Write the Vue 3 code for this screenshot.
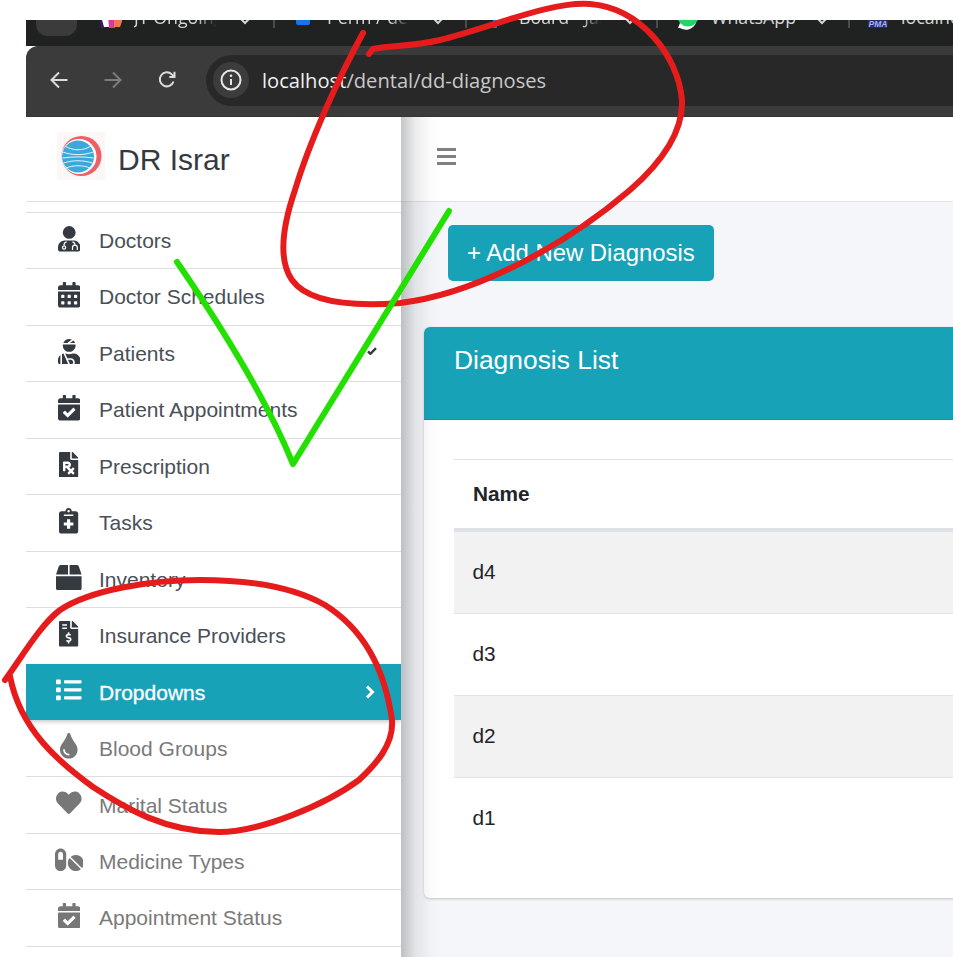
<template>
  <div class="screen">
    <!-- browser chrome -->
    <div class="tabstrip">
      <div class="tab-current"></div>
      <div
        v-for="tab in tabs"
        :key="tab.name"
        class="tab"
        :style="{ width: tab.width + 'px', paddingLeft: tab.pad + 'px' }"
      >
        <svg class="favicon" viewBox="0 0 22 22">
          <template v-if="tab.icon === 'figma'">
            <path d="M-2 -4h10l-3 12h-4z" fill="#3b1a5c" />
            <path d="M1 -4h10l-1 11h-6z" fill="#fff" />
            <path d="M8 -4h9l-2 12h-6z" fill="#d63aa0" />
            <path d="M14 -4h10l-4 11h-6z" fill="#f0784a" />
          </template>
          <rect v-else-if="tab.icon === 'blue'" x="3" y="-6" width="14" height="11" rx="2" fill="#1a73e8" />
          <path v-else-if="tab.icon === 'board'" d="M1 -4h18v3h-7v9h-4v-9h-7z" fill="#1a73e8" />
          <template v-else-if="tab.icon === 'whatsapp'">
            <path d="M1 8l2-5h16a11 11 0 0 1-16 5z" fill="#fff" />
            <circle cx="11" cy="-4" r="10.500" fill="#25d366" />
          </template>
          <template v-else>
            <path d="M0 -2h22l-2 10H2z" fill="#232c66" />
            <text class="pma" x="11" y="7" text-anchor="middle">PMA</text>
          </template>
        </svg>
        <span class="tab-name" :class="{ fade: tab.fade }">{{ tab.name }}</span>
        <svg class="tab-chevron" viewBox="0 0 14 10"><path d="M2 1l5 5 5-5" /></svg>
      </div>
    </div>

    <div class="toolbar">
      <svg class="tool-icon" viewBox="0 0 18 18"><path d="M17.500 9H1.500M9 1.500L1.500 9 9 16.500" /></svg>
      <svg class="tool-icon dim" viewBox="0 0 18 18"><path d="M.5 9h16M9 1.500L16.500 9 9 16.500" /></svg>
      <svg class="tool-icon" viewBox="0 0 18 18"><path d="M15.500 10.500A7 7 0 1 1 13.800 3.400L16 5.500M16.500 .8v5.200h-5.200" /></svg>
      <div class="urlbar">
        <div class="site-chip">
          <svg class="info-icon" viewBox="0 0 22 22">
            <circle cx="11" cy="11" r="9.500" />
            <path d="M11 10v6" />
            <circle class="dot" cx="11" cy="6.800" r="1.300" />
          </svg>
        </div>
        <span class="url"><b>localhost</b>/dental/dd-diagnoses</span>
      </div>
    </div>

    <div class="app">
      <aside class="sidebar">
        <div class="brand">
          <div class="logo">
            <svg viewBox="0 0 48 48">
              <circle cx="24.500" cy="24" r="20" fill="#ee5f66" />
              <circle cx="22" cy="24.500" r="17.500" fill="#fff" />
              <circle cx="21" cy="24.500" r="16" fill="#3ca9dc" />
              <path d="M8 14c8 5 18 5 26 0M5.500 20c10 3.500 21 3.500 31 0M5.500 26c10-1.500 21-1.500 31 0M6.500 31c10-3 19-3 29 0M9 36c7-3 17-3 24 0" fill="none" stroke="#e4f4fb" stroke-width="1" />
            </svg>
          </div>
          <span class="brand-name">DR Israr</span>
        </div>
        <nav class="nav">
          <a
            v-for="item in menu"
            :key="item.label"
            class="nav-row"
            :class="{ active: item.active, sub: item.sub }"
          >
            <span class="nav-icon">
              <svg v-if="item.label === 'Doctors'" viewBox="0 0 448 512" height="25.600">
                <circle cx="224" cy="128" r="128" fill="currentColor" />
                <path d="M0 464v-42c0-72 58-134 134-134h180c76 0 134 62 134 134v42c0 26-22 48-48 48H48c-26 0-48-22-48-48z" fill="currentColor" />
                <circle cx="122" cy="432" r="32" fill="none" stroke="#fff" stroke-width="24" />
                <path d="M122 400V372c0-30 20-48 50-56M290 480v-50c0-62 96-62 96 0v50M338 372c0-30-20-48-50-56" fill="none" stroke="#fff" stroke-width="24" />
              </svg>
              <svg v-else :viewBox="item.box" height="25.600"><path :d="item.d" fill="currentColor" /></svg>
            </span>
            <span class="nav-label">{{ item.label }}</span>
            <svg v-if="item.check" class="row-check" viewBox="0 0 12 10"><path d="M1 5.500l3 3 7-7" /></svg>
            <svg v-if="item.active" class="row-chevron" viewBox="0 0 10 14"><path d="M2 1.500L7.500 7 2 12.500" /></svg>
          </a>
        </nav>
      </aside>

      <main class="main">
        <header class="topbar">
          <svg class="burger" viewBox="0 0 20 17"><path d="M0 0h19v3H0zM0 7h19v3H0zM0 14h19v3H0z" /></svg>
        </header>
        <div class="content">
          <button class="add-btn">+ Add New Diagnosis</button>
          <section class="card">
            <div class="card-head">Diagnosis List</div>
            <div class="card-body">
              <table class="grid">
                <thead>
                  <tr><th>Name</th></tr>
                </thead>
                <tbody>
                  <tr v-for="d in diagnoses" :key="d"><td>{{ d }}</td></tr>
                </tbody>
              </table>
            </div>
          </section>
        </div>
      </main>
    </div>

    <!-- hand drawn marks on top of the screenshot -->
    <svg class="marks" viewBox="0 0 953 957">
      <path class="red" d="M363 33C340 75 310 140 295 190C283 225 278 260 292 280C310 305 360 306 400 303C470 295 560 250 630 190C670 155 683 125 682 100C678 55 640 8 590 4C550 1 490 28 440 40C410 47 390 45 373 49L369 54" />
      <path class="green" d="M177 262C210 310 265 395 293 464L449 211" />
      <path class="red" d="M5 680C20 660 40 625 60 610C90 590 150 580 200 580C250 580 295 588 325 605C365 630 385 670 392 720C394 745 375 765 359 780C325 805 260 832 219 832C165 832 125 808 93 787C60 763 20 730 10 676" />
    </svg>
  </div>
</template>

<script setup>
const tabs = [
  { name: 'JT Ongoing', icon: 'figma', width: 175, pad: 0, fade: true },
  { name: 'Perm / der', icon: 'blue', width: 192, pad: 18, fade: true },
  { name: 'Board - Jar', icon: 'board', width: 191, pad: 18, fade: true },
  { name: 'WhatsApp', icon: 'whatsapp', width: 192, pad: 19 },
  { name: 'localhost', icon: 'pma', width: 120, pad: 17 }
]

const calCheck = 'M436 160H12c-6.627 0-12-5.373-12-12v-36c0-26.510 21.490-48 48-48h48V12c0-6.627 5.373-12 12-12h40c6.627 0 12 5.373 12 12v52h128V12c0-6.627 5.373-12 12-12h40c6.627 0 12 5.373 12 12v52h48c26.510 0 48 21.490 48 48v36c0 6.627-5.373 12-12 12zM12 192h424c6.627 0 12 5.373 12 12v260c0 26.510-21.490 48-48 48H48c-26.510 0-48-21.490-48-48V204c0-6.627 5.373-12 12-12zm333.296 95.947l-28.169-28.398c-4.667-4.705-12.265-4.736-16.970-.068L194.120 364.665l-45.980-46.352c-4.667-4.705-12.266-4.736-16.971-.068l-28.397 28.170c-4.705 4.667-4.736 12.265-.068 16.970l82.601 83.269c4.667 4.705 12.265 4.736 16.970.068l142.953-141.805c4.705-4.667 4.736-12.265.068-16.970z'

const menu = [
  { label: 'Doctors', box: '0 0 448 512' },
  { label: 'Doctor Schedules', box: '0 0 448 512', d: 'M0 464c0 26.500 21.500 48 48 48h352c26.500 0 48-21.500 48-48V192H0v272zm320-196c0-6.600 5.400-12 12-12h40c6.600 0 12 5.400 12 12v40c0 6.600-5.400 12-12 12h-40c-6.600 0-12-5.400-12-12v-40zm0 128c0-6.600 5.400-12 12-12h40c6.600 0 12 5.400 12 12v40c0 6.600-5.400 12-12 12h-40c-6.600 0-12-5.400-12-12v-40zM192 268c0-6.600 5.400-12 12-12h40c6.600 0 12 5.400 12 12v40c0 6.600-5.400 12-12 12h-40c-6.600 0-12-5.400-12-12v-40zm0 128c0-6.600 5.400-12 12-12h40c6.600 0 12 5.400 12 12v40c0 6.600-5.400 12-12 12h-40c-6.600 0-12-5.400-12-12v-40zM64 268c0-6.600 5.400-12 12-12h40c6.600 0 12 5.400 12 12v40c0 6.600-5.400 12-12 12H76c-6.600 0-12-5.400-12-12v-40zm0 128c0-6.600 5.400-12 12-12h40c6.600 0 12 5.400 12 12v40c0 6.600-5.400 12-12 12H76c-6.600 0-12-5.400-12-12v-40zM400 64h-48V16c0-8.800-7.200-16-16-16h-32c-8.800 0-16 7.200-16 16v48H160V16c0-8.800-7.200-16-16-16h-32c-8.800 0-16 7.200-16 16v48H48C21.500 64 0 85.500 0 112v48h448v-48c0-26.500-21.500-48-48-48z' },
  { label: 'Patients', check: true, box: '0 0 448 512', d: 'M277.370 11.980C261.080 4.470 243.110 0 224 0c-53.690 0-99.500 33.130-118.530 80h81.190l90.710-68.020zM342.530 80c-7.920-19.500-20.080-36.770-35.290-50.590L240 80h102.530zM224 256c70.690 0 128-57.310 128-128 0-5.480-.95-10.700-1.610-16H97.610c-.67 5.300-1.610 10.520-1.610 16 0 70.690 57.310 128 128 128zM80 299.700V512h128.260l-98.450-221.520A132.835 132.835 0 0 0 80 299.700zM0 464c0 26.510 21.490 48 48 48V320.240C18.880 344.890 0 381.260 0 422.400V464zm256-48h-55.380l42.670 96H256c26.470 0 48-21.530 48-48s-21.530-48-48-48zm57.600-128h-16.710c-22.240 10.180-46.830 16-72.890 16s-50.650-5.820-72.890-16h-7.370l42.670 96H256c44.110 0 80 35.890 80 80 0 18.080-6.260 34.590-16.400 48H400c26.510 0 48-21.490 48-48v-41.600c0-74.230-60.170-134.400-134.400-134.400z' },
  { label: 'Patient Appointments', box: '0 0 448 512', d: calCheck },
  { label: 'Prescription', box: '0 0 384 512', d: 'M224 136V0H24C10.750 0 0 10.750 0 24v464c0 13.250 10.750 24 24 24h336c13.250 0 24-10.750 24-24V160H248c-13.200 0-24-10.800-24-24zm68.530 179.480l11.310 11.310c6.250 6.250 6.250 16.380 0 22.630l-29.900 29.900L304 409.380c6.250 6.250 6.250 16.380 0 22.630l-11.310 11.310c-6.250 6.250-16.380 6.250-22.630 0L240 413.250l-30.060 30.060c-6.250 6.250-16.380 6.250-22.630 0L176 432c-6.250-6.250-6.250-16.380 0-22.630l30.060-30.060L146.740 320H128v48c0 8.840-7.160 16-16 16H96c-8.840 0-16-7.160-16-16V208c0-8.840 7.160-16 16-16h80c35.350 0 64 28.650 64 64 0 24.220-13.620 45.050-33.460 55.920L240 345.370l29.900-29.900c6.250-6.240 16.380-6.240 22.630.01zM176 272h-48v-32h48c8.820 0 16 7.180 16 16s-7.180 16-16 16zm208-150.100v6.100H256V0h6.060c6.400 0 12.500 2.500 17 7l97.900 98c4.500 4.500 7 10.600 7 16.900z' },
  { label: 'Tasks', box: '0 0 384 512', d: 'M336 64h-80c0-35.300-28.700-64-64-64s-64 28.700-64 64H48C21.500 64 0 85.500 0 112v352c0 26.500 21.500 48 48 48h288c26.500 0 48-21.500 48-48V112c0-26.500-21.500-48-48-48zM192 40c13.300 0 24 10.700 24 24s-10.700 24-24 24-24-10.700-24-24 10.700-24 24-24zm96 304c0 4.400-3.600 8-8 8h-56v56c0 4.400-3.600 8-8 8h-48c-4.400 0-8-3.600-8-8v-56h-56c-4.400 0-8-3.600-8-8v-48c0-4.400 3.600-8 8-8h56v-56c0-4.400 3.600-8 8-8h48c4.400 0 8 3.600 8 8v56h56c4.400 0 8 3.600 8 8v48zm0-192c0 4.400-3.600 8-8 8H104c-4.400 0-8-3.600-8-8v-16c0-4.400 3.600-8 8-8h176c4.400 0 8 3.600 8 8v16z' },
  { label: 'Inventory', box: '0 0 512 512', d: 'M509.500 184.600L458.900 32.800C452.400 13.200 434.100 0 413.400 0H272v192h238.700c-.4-2.500-.4-5-1.200-7.400zM240 0H98.600c-20.700 0-39 13.200-45.500 32.800L2.500 184.600c-.8 2.400-.8 4.900-1.200 7.400H240V0zM0 224v240c0 26.500 21.500 48 48 48h416c26.500 0 48-21.500 48-48V224H0z' },
  { label: 'Insurance Providers', box: '0 0 384 512', d: 'M377 105L279.100 7c-4.500-4.500-10.600-7-17-7H256v128h128v-6.100c0-6.300-2.500-12.400-7-16.900zm-153 31V0H24C10.700 0 0 10.700 0 24v464c0 13.300 10.700 24 24 24h336c13.300 0 24-10.700 24-24V160H248c-13.200 0-24-10.800-24-24zM64 72c0-4.420 3.580-8 8-8h80c4.420 0 8 3.580 8 8v16c0 4.420-3.580 8-8 8H72c-4.420 0-8-3.580-8-8V72zm0 80v-16c0-4.420 3.580-8 8-8h80c4.420 0 8 3.580 8 8v16c0 4.420-3.580 8-8 8H72c-4.420 0-8-3.580-8-8zm144 263.880V440c0 4.420-3.580 8-8 8h-16c-4.420 0-8-3.580-8-8v-24.290c-11.290-.58-22.270-4.520-31.370-11.350-3.900-2.930-4.100-8.770-.57-12.140l11.750-11.210c2.770-2.640 6.890-2.760 10.130-.73 3.870 2.420 8.260 3.720 12.820 3.720h28.110c6.500 0 11.800-5.920 11.800-13.190 0-5.950-3.610-11.190-8.770-12.730l-45-13.500c-18.590-5.580-31.580-23.420-31.580-43.390 0-24.520 19.050-44.440 42.670-45.070V232c0-4.420 3.580-8 8-8h16c4.420 0 8 3.580 8 8v24.290c11.290.58 22.270 4.510 31.370 11.350 3.900 2.930 4.100 8.770.57 12.140l-11.750 11.210c-2.770 2.640-6.890 2.760-10.130.73-3.870-2.430-8.260-3.720-12.820-3.720h-28.110c-6.500 0-11.800 5.920-11.800 13.190 0 5.950 3.610 11.190 8.770 12.730l45 13.500c18.590 5.580 31.580 23.420 31.580 43.390 0 24.530-19.050 44.440-42.670 45.070z' },
  { label: 'Dropdowns', active: true, box: '0 0 512 512', d: 'M80 368H16a16 16 0 0 0-16 16v64a16 16 0 0 0 16 16h64a16 16 0 0 0 16-16v-64a16 16 0 0 0-16-16zm0-320H16A16 16 0 0 0 0 64v64a16 16 0 0 0 16 16h64a16 16 0 0 0 16-16V64a16 16 0 0 0-16-16zm0 160H16a16 16 0 0 0-16 16v64a16 16 0 0 0 16 16h64a16 16 0 0 0 16-16v-64a16 16 0 0 0-16-16zm416 176H176a16 16 0 0 0-16 16v32a16 16 0 0 0 16 16h320a16 16 0 0 0 16-16v-32a16 16 0 0 0-16-16zm0-320H176a16 16 0 0 0-16 16v32a16 16 0 0 0 16 16h320a16 16 0 0 0 16-16V80a16 16 0 0 0-16-16zm0 160H176a16 16 0 0 0-16 16v32a16 16 0 0 0 16 16h320a16 16 0 0 0 16-16v-32a16 16 0 0 0-16-16z' },
  { label: 'Blood Groups', sub: true, box: '0 0 352 512', d: 'M205.220 22.090c-7.940-28.780-49.440-30.120-58.440 0C100.010 179.850 0 222.720 0 333.910 0 432.350 78.720 512 176 512s176-79.650 176-178.090c0-111.750-99.790-153.340-146.780-311.820zM176 448c-61.750 0-112-50.250-112-112 0-8.840 7.160-16 16-16s16 7.160 16 16c0 44.110 35.890 80 80 80 8.840 0 16 7.160 16 16s-7.160 16-16 16z' },
  { label: 'Marital Status', sub: true, box: '0 0 512 512', d: 'M462.300 62.600C407.500 15.900 326 24.300 275.700 76.200L256 96.500l-19.700-20.300C186.100 24.300 104.500 15.900 49.700 62.600c-62.800 53.600-66.100 149.800-9.900 207.900l193.500 199.800c12.500 12.900 32.800 12.900 45.300 0l193.500-199.800c56.300-58.100 53-154.300-9.800-207.900z' },
  { label: 'Medicine Types', sub: true, box: '0 0 576 512', d: 'M112 32C50.100 32 0 82.100 0 144v224c0 61.900 50.100 112 112 112s112-50.100 112-112V144c0-61.900-50.100-112-112-112zm48 224H64V144c0-26.500 21.500-48 48-48s48 21.500 48 48v112zm139.700-29.700c-3.500-3.500-9.400-3.100-12.300.8-45.300 62.500-40.400 150.100 15.900 206.400 56.300 56.300 143.900 61.200 206.400 15.900 4-2.900 4.300-8.800.8-12.300L299.700 226.300zm229.800-19c-56.300-56.300-143.900-61.200-206.400-15.900-4 2.900-4.300 8.800-.8 12.300l210.900 210.900c3.500 3.500 9.400 3.100 12.300-.8 45.300-62.600 40.500-150.100-15.900-206.500z' },
  { label: 'Appointment Status', sub: true, box: '0 0 448 512', d: calCheck }
]

const diagnoses = ['d4', 'd3', 'd2', 'd1']
</script>

<style>
html,
body {
  margin: 0;
  background: #fff;
  overflow: hidden;
}
</style>

<style scoped>
.screen {
  position: relative;
  width: 953px;
  height: 957px;
  box-sizing: border-box;
  padding: 20px 0 0 26px;
  overflow: hidden;
  background: #fff;
  font-family: "Liberation Sans", Arial, sans-serif;
}

/* browser chrome */
.tabstrip {
  display: flex;
  height: 26px;
  overflow: hidden;
  background: #202222;
  font-family: "Open Sans", sans-serif;
  font-size: 17.800px;
  color: #d5d5d5;
}
.tab-current {
  width: 41px;
  height: 16px;
  margin: 0 23px 0 10px;
  flex: none;
  border-radius: 0 0 12px 12px;
  background: #3b3b3b;
}
.tab {
  display: flex;
  flex: none;
  box-sizing: border-box;
  height: 8px;
  gap: 12px;
  align-items: flex-end;
  border-right: 2px solid #4b4b4b;
}
.favicon {
  flex: none;
  align-self: flex-start;
  width: 22px;
  height: 22px;
  overflow: hidden;
}
.pma {
  font-family: "Liberation Sans", Arial, sans-serif;
  font-size: 8.500px;
  font-weight: 700;
  font-style: italic;
  fill: #aab2ff;
}
.tab-name {
  flex: none;
  width: 84px;
  overflow: hidden;
  white-space: nowrap;
  line-height: 24px;
  margin-bottom: -1px;
}
.tab-name.fade {
  -webkit-mask-image: linear-gradient(to right, #000 75%, transparent 98%);
  mask-image: linear-gradient(to right, #000 75%, transparent 98%);
}
.tab-chevron {
  flex: none;
  width: 14px;
  height: 10px;
  margin-left: 8px;
  transform: translateY(-1px);
  fill: none;
  stroke: #d5d5d5;
  stroke-width: 2;
}
.toolbar {
  display: flex;
  align-items: center;
  height: 71px;
  box-sizing: border-box;
  padding: 9px 0 11px 24px;
  gap: 36px;
  border-radius: 12px 0 0 0;
  background: #3b3b3b;
  border-bottom: 1px solid #343434;
}
.tool-icon {
  flex: none;
  width: 18px;
  height: 18px;
  fill: none;
  stroke: #dcdcdc;
  stroke-width: 2;
}
.tool-icon.dim {
  stroke: #7c7c7c;
}
.urlbar {
  display: flex;
  flex: 1;
  align-items: center;
  height: 51px;
  margin-left: -6px;
  padding-left: 7px;
  gap: 13px;
  border-radius: 26px 0 0 26px;
  background: #282828;
}
.site-chip {
  display: flex;
  align-items: center;
  justify-content: center;
  width: 36px;
  height: 36px;
  border-radius: 50%;
  background: #3c3c3c;
}
.info-icon {
  width: 22px;
  height: 22px;
  fill: none;
  stroke: #e6e6e6;
  stroke-width: 2;
}
.info-icon .dot {
  fill: #e6e6e6;
  stroke: none;
}
.url {
  font-family: "Open Sans", sans-serif;
  font-size: 20.150px;
  color: #c9c9c9;
  white-space: nowrap;
}
.url b {
  font-weight: 400;
  color: #f0f0f0;
}

/* app */
.app {
  display: flex;
  height: 840px;
}
.sidebar {
  position: relative;
  z-index: 2;
  flex: none;
  width: 375px;
  overflow: hidden;
  background: #fff;
}
.app::after {
  content: "";
  position: absolute;
  z-index: 3;
  left: 401px;
  top: 117px;
  width: 40px;
  height: 840px;
  pointer-events: none;
  background: linear-gradient(to right, rgba(60, 64, 70, 0.3), rgba(60, 64, 70, 0.1) 35%, rgba(60, 64, 70, 0.02) 75%, rgba(60, 64, 70, 0));
}
.brand {
  display: flex;
  align-items: center;
  box-sizing: border-box;
  height: 85px;
  padding: 0 0 6px 31px;
  gap: 13px;
  border-bottom: 1px solid #dee2e6;
}
.logo {
  width: 48px;
  height: 48px;
  background: #fdf6f6;
}
.logo svg {
  display: block;
  width: 48px;
  height: 48px;
}
.brand-name {
  margin-top: 8px;
  font-size: 30px;
  color: #343a40;
}
.nav {
  display: flex;
  flex-direction: column;
  padding-top: 10px;
}
.nav-row {
  display: flex;
  flex: none;
  align-items: center;
  box-sizing: border-box;
  height: 56.450px;
  padding-left: 28px;
  gap: 15px;
  border-top: 1px solid #dcdee0;
  font-size: 21px;
  color: #495057;
}
.nav-row:last-child {
  height: 57.450px;
  padding-bottom: 1px;
  border-bottom: 1px solid #dcdee0;
}
.nav-label {
  margin-top: 0.6px;
}
.active .nav-label,
.sub .nav-label {
  margin-top: 1.800px;
}
.nav-row.active {
  position: relative;
  border-top: 0;
  background: #18a2b8;
  color: #fff;
  box-shadow: 0 2px 4px rgba(0, 0, 0, 0.2);
  -webkit-text-stroke: 0.3px #fff;
}
.nav-row.sub {
  color: #7a7a7a;
}
.nav-row.active + .nav-row {
  border-top: 0;
}
.nav-icon {
  display: flex;
  flex: none;
  justify-content: center;
  width: 30px;
  margin-top: -4px;
  color: #343a40;
}
.active .nav-icon {
  color: #fff;
}
.sub .nav-icon {
  color: #777;
}
.nav-icon svg {
  display: block;
}
.row-check {
  width: 10px;
  height: 8px;
  margin-left: auto;
  margin-right: 24px;
  margin-top: -5px;
  fill: none;
  stroke: #343a40;
  stroke-width: 3;
}
.row-chevron {
  width: 10px;
  height: 14px;
  margin-left: auto;
  margin-right: 26px;
  fill: none;
  stroke: #fff;
  stroke-width: 3;
}

/* main area */
.main {
  flex: 1;
  min-width: 0;
  background: #f4f6f9;
}
.topbar {
  display: flex;
  align-items: center;
  box-sizing: border-box;
  height: 85px;
  padding: 0 0 6px 36px;
  background: #fff;
  border-bottom: 1px solid #dee2e6;
}
.burger {
  width: 20px;
  height: 17px;
  fill: #808080;
}
.content {
  padding: 23px 0 0 23px;
}
.add-btn {
  display: block;
  height: 56px;
  margin: 0 0 46px 24px;
  padding: 0 19px;
  border: 0;
  border-radius: 5px;
  background: #18a2b8;
  color: #fff;
  font-family: inherit;
  font-size: 23.900px;
}
.card {
  margin-right: -16px;
  height: 571px;
  box-sizing: border-box;
  border-radius: 6px;
  background: #fff;
  box-shadow: 0 1px 3px rgba(0, 0, 0, 0.2);
}
.card-head {
  box-sizing: border-box;
  height: 93px;
  padding: 19px 0 0 30px;
  border-radius: 6px 6px 0 0;
  border-bottom: 1px solid #14909f;
  background: #18a2b8;
  color: #fff;
  font-size: 26.400px;
  line-height: 29px;
}
.card-body {
  padding: 39px 0 0 30px;
}
.grid {
  width: 100%;
  border-collapse: separate;
  border-spacing: 0;
  font-size: 20.800px;
  color: #212529;
}
.grid th {
  height: 73px;
  box-sizing: border-box;
  padding: 0 0 0 19px;
  text-align: left;
  font-weight: 700;
  border-top: 1px solid #dee2e6;
  border-bottom: 4px solid #dee2e6;
}
.grid td {
  height: 82px;
  box-sizing: border-box;
  padding: 0 0 2px 18.500px;
  text-align: left;
  border-bottom: 1px solid #e2e4e7;
}
.grid tbody tr:last-child td {
  border-bottom: 0;
}
.grid tbody tr:nth-child(odd) td {
  background: #f2f2f2;
}

/* annotations */
.marks {
  position: absolute;
  left: 0;
  top: 0;
  z-index: 5;
  width: 953px;
  height: 957px;
  fill: none;
  stroke-linecap: round;
  stroke-linejoin: round;
  pointer-events: none;
}
.red {
  stroke: #e61c1c;
  stroke-width: 6;
}
.green {
  stroke: #22e000;
  stroke-width: 6;
}
</style>
